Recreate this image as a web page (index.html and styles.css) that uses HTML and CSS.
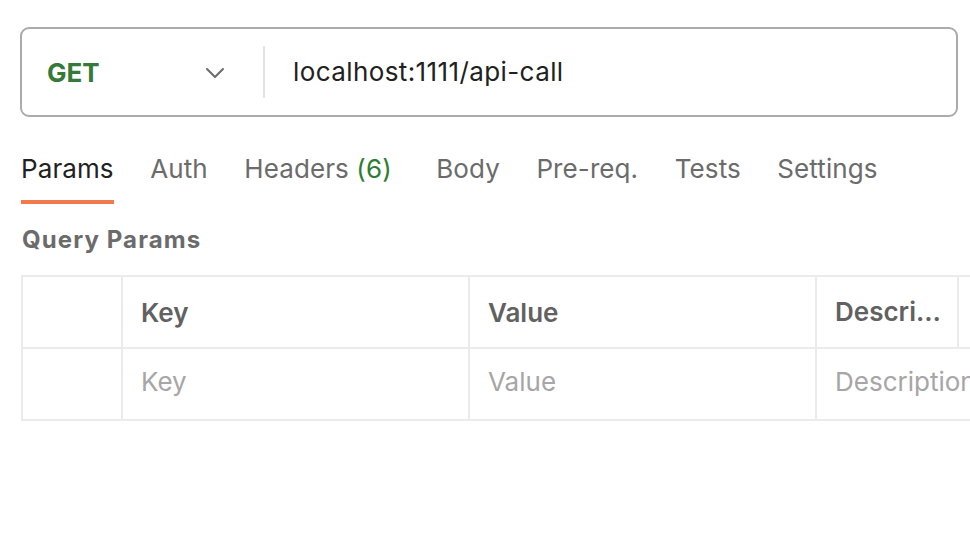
FILE: index.html
```html
<!DOCTYPE html>
<html>
<head>
<meta charset="utf-8">
<link rel="stylesheet" href="styles.css">
</head>
<body>
<div class="page">
  <div class="urlbar">
    <div class="method">
      <span class="method-name">GET</span>
      <svg class="chevron" width="20" height="12" viewBox="0 0 20 12"><polyline points="2,2 10,10 18,2" fill="none" stroke="#6b6b6b" stroke-width="2" stroke-linecap="round" stroke-linejoin="round"/></svg>
    </div>
    <div class="sep"></div>
    <div class="url">localhost:1111/api-call</div>
  </div>

  <div class="tabs">
    <div class="tab active">Params</div>
    <div class="tab">Auth</div>
    <div class="tab headers">Headers <span class="count">(6)</span></div>
    <div class="tab">Body</div>
    <div class="tab">Pre-req.</div>
    <div class="tab">Tests</div>
    <div class="tab">Settings</div>
  </div>

  <div class="section-title">Query Params</div>

  <div class="grid">
    <div class="cell"></div>
    <div class="cell head">Key</div>
    <div class="cell head">Value</div>
    <div class="cell head trunc">Description</div>
    <div class="cell"></div>

    <div class="cell"></div>
    <div class="cell ph">Key</div>
    <div class="cell ph">Value</div>
    <div class="cell ph span2">Description</div>
  </div>
</div>
</body>
</html>
```

FILE: styles.css
```css
html, body {
  margin: 0;
  padding: 0;
  background: #ffffff;
  overflow: hidden;
}
body {
  font-family: Inter, "Noto Sans", sans-serif;
  width: 970px;
  height: 552px;
}
.page {
  padding: 27px 0 0 20px;
}
.urlbar {
  box-sizing: border-box;
  width: 938px;
  height: 90px;
  border: 2px solid #ababab;
  border-radius: 9px;
  display: flex;
  align-items: center;
}
.method {
  box-sizing: border-box;
  width: 241px;
  padding-left: 25px;
  padding-right: 38px;
  display: flex;
  align-items: center;
  justify-content: space-between;
}
.method-name {
  font-size: 26px;
  font-weight: 700;
  color: #357a38;
}
.chevron {
  display: block;
  margin-top: 2px;
}
.sep {
  width: 2px;
  height: 52px;
  background: #e3e3e3;
}
.url {
  margin-left: 28px;
  font-size: 26px;
  letter-spacing: 0.4px;
  color: #212121;
  margin-bottom: 2px;
}
.tabs {
  display: flex;
  gap: 36.5px;
  margin-top: 36px;
  padding-left: 1px;
}
.tab {
  font-size: 26px;
  line-height: 32px;
  letter-spacing: 0.1px;
  padding-bottom: 15px;
  border-bottom: 4px solid transparent;
  color: #6b6b6b;
}
.tab.active {
  color: #212121;
  border-bottom-color: #f07a4c;
}
.tab.headers {
  margin-right: 8px;
}
.count {
  color: #2e7d32;
}
.section-title {
  margin-top: 21px;
  padding-left: 2px;
  font-size: 24px;
  line-height: 30px;
  font-weight: 700;
  letter-spacing: 1.1px;
  color: #6b6b6b;
}
.grid {
  margin-top: 20px;
  margin-left: 1px;
  width: 1000px;
  display: grid;
  grid-template-columns: 98px 345px 345px 140px 1fr;
  grid-template-rows: 70px 70px;
  gap: 2px;
  padding: 2px 0 2px 2px;
  background: #ebebeb;
}
.cell {
  background: #ffffff;
  display: flex;
  align-items: center;
  padding: 0 18px;
  font-size: 26px;
  white-space: nowrap;
  overflow: hidden;
  min-width: 0;
}
.head {
  font-weight: 600;
  color: #616161;
}
.trunc {
  display: block;
  line-height: 70px;
  padding-right: 8px;
  text-overflow: ellipsis;
}
.ph {
  color: #a6a6a6;
  padding-bottom: 6px;
}
.span2 {
  grid-column: span 2;
}
```
